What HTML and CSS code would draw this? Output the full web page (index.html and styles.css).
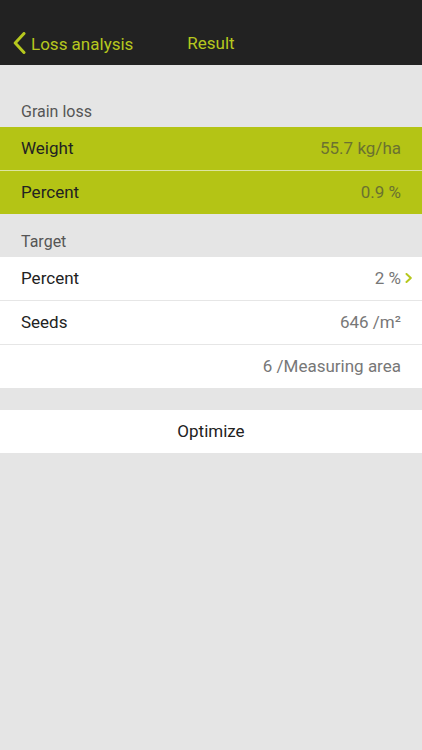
FILE: index.html
```html
<!DOCTYPE html>
<html>
<head>
<meta charset="utf-8">
<link rel="stylesheet" href="styles.css">
</head>
<body>
<div class="screen">
  <header class="navbar">
    <div class="back">
      <svg class="back-icon" width="13" height="22" viewBox="0 0 13 22"><path d="M11 1.5 L2.2 11 L11 20.5" fill="none" stroke="#b6c81e" stroke-width="3" stroke-linecap="round" stroke-linejoin="round"/></svg>
      <span>Loss analysis</span>
    </div>
    <div class="title">Result</div>
  </header>

  <div class="section-label first">Grain loss</div>
  <div class="group green">
    <div class="row"><span class="key">Weight</span><span class="val">55.7 kg/ha</span></div>
    <div class="row"><span class="key">Percent</span><span class="val">0.9 %</span></div>
  </div>

  <div class="section-label">Target</div>
  <div class="group white">
    <div class="row arrow"><span class="key">Percent</span><span class="val">2 %<svg class="chev" width="8" height="10" viewBox="0 0 8 10"><path d="M1.5 1 L5.8 5 L1.5 9" fill="none" stroke="#b6c81e" stroke-width="2" stroke-linecap="round" stroke-linejoin="round"/></svg></span></div>
    <div class="row"><span class="key">Seeds</span><span class="val">646 /m²</span></div>
    <div class="row"><span class="key"></span><span class="val">6 /Measuring area</span></div>
  </div>

  <div class="group white button-group">
    <div class="row center">Optimize</div>
  </div>
</div>
</body>
</html>
```
FILE: styles.css
```css
* { box-sizing: border-box; }
html, body { margin: 0; padding: 0; }
body {
  font-family: Roboto, "Open Sans", "Liberation Sans", sans-serif;
  background: #e5e5e5;
  width: 422px;
  height: 750px;
  overflow: hidden;
}
.screen { width: 422px; min-height: 750px; background: #e5e5e5; }
.navbar {
  position: relative;
  height: 65px;
  background: #222222;
  display: flex;
  align-items: flex-end;
  padding: 0 0 11px 13px;
}
.back {
  display: flex;
  align-items: center;
  gap: 5px;
  color: #b6c81e;
  font-size: 17px;
  height: 22px;
}
.back span { position: relative; top: 1px; }
.back-icon { display: block; }
.title {
  position: absolute;
  left: 0;
  right: 0;
  bottom: 12px;
  text-align: center;
  color: #b6c81e;
  font-size: 17px;
  pointer-events: none;
}
.section-label {
  color: #555555;
  font-size: 16px;
  padding: 0 21px;
  height: 43px;
  display: flex;
  align-items: flex-end;
  padding-bottom: 6px;
}
.section-label.first { height: 62px; }
.group .row {
  height: 44px;
  display: flex;
  align-items: center;
  justify-content: space-between;
  padding: 0 21px 1px;
  font-size: 17px;
  border-bottom: 1px solid transparent;
}
.group .row:last-child { height: 43px; border-bottom: none; }
.green { background: #b4c415; }
.green .row { border-bottom-color: #dde5a0; }
.green .key { color: #222222; }
.green .val { color: #6b7230; }
.white { background: #ffffff; }
.white .row { border-bottom-color: #e6e6e6; }
.white .key { color: #222222; }
.white .val { color: #777777; }
.row.arrow { padding-right: 9px; }
.val { display: flex; align-items: center; }
.chev { display: block; margin-left: 4px; }
.button-group { margin-top: 22px; }
.row.center { justify-content: center; color: #222222; }
```
